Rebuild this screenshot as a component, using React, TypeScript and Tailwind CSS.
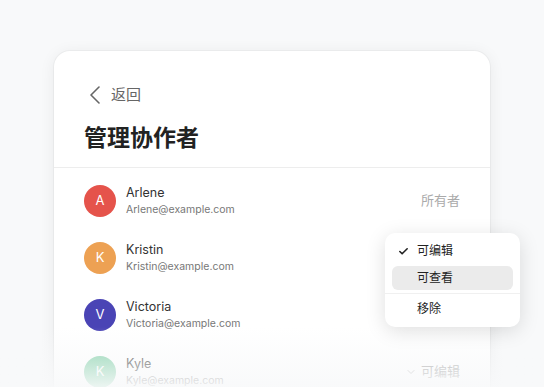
import { Check, ChevronDown } from 'lucide-react';

const people = [
  { name: 'Arlene', email: 'Arlene@example.com', color: 'bg-[#e5534b]', role: 'owner' },
  { name: 'Kristin', email: 'Kristin@example.com', color: 'bg-[#eda153]', role: 'menu' },
  { name: 'Victoria', email: 'Victoria@example.com', color: 'bg-[#4a44b5]', role: 'none' },
  { name: 'Kyle', email: 'Kyle@example.com', color: 'bg-[#7fcfa6]', role: 'edit' },
];

const font = { fontFamily: '"Inter", "Noto Sans CJK SC", sans-serif' };

export default function App() {
  return (
    <div className="relative h-[387px] w-[544px] overflow-hidden bg-[#f8f9fa]" style={font}>
      <div className="relative ml-[54px] mt-[51px] w-[436px] rounded-2xl bg-white shadow-[0_2px_16px_rgba(0,0,0,0.07)] ring-1 ring-black/[0.03]">
        {/* Header */}
        <div className="px-[30px] pt-[32px] pb-[13px]">
          <div className="flex h-[24px] items-center text-[#666]">
            <svg className="ml-[5px] h-[18px] w-[12px]" viewBox="0 0 12 18" fill="none" stroke="currentColor" strokeWidth={1.6} strokeLinecap="round" strokeLinejoin="round">
              <path d="M10 1 L2 9 L10 17" />
            </svg>
            <span className="ml-[10px] text-[15px]">返回</span>
          </div>
          <h1 className="mt-[15px] text-[23px] font-bold leading-[32px] text-[#222]">管理协作者</h1>
        </div>
        <div className="h-px bg-[#ededed]" />

        {/* Collaborators */}
        <div className="px-[30px] pt-[4px] pb-[40px]">
          {people.map((p) => (
            <div key={p.name} className="flex h-[57px] items-center">
              <div className={`flex h-[32px] w-[32px] items-center justify-center rounded-full text-[13px] text-white ${p.color}`}>
                {p.name[0]}
              </div>
              <div className="ml-[10px] flex-1">
                <div className="text-[12.5px] leading-[17px] text-[#333]">{p.name}</div>
                <div className="mt-[1px] text-[10.5px] leading-[15px] text-[#777]">{p.email}</div>
              </div>
              {p.role === 'owner' && <span className="text-[13px] text-[#aaa]">所有者</span>}
              {p.role === 'edit' && (
                <span className="flex items-center gap-[4px] text-[13px] text-[#999]">
                  <ChevronDown className="h-[12px] w-[12px]" strokeWidth={1.5} />
                  可编辑
                </span>
              )}
            </div>
          ))}
        </div>

        {/* Role menu */}
        <div className="absolute left-[331px] top-[182px] z-10 w-[135px] rounded-[10px] bg-white px-[7px] pt-[6px] pb-[6px] text-[12px] text-[#222] shadow-[0_4px_20px_rgba(0,0,0,0.13)]">
          <div className="flex h-[24px] items-center">
            <Check className="ml-[6px] h-[11px] w-[11px]" strokeWidth={3.5} />
            <span className="ml-[8px]">可编辑</span>
          </div>
          <div className="mt-[3px] flex h-[24px] items-center rounded-[6px] bg-[#ebebeb] pl-[25px]">可查看</div>
          <div className="mx-[-7px] mt-[3px] h-px bg-[#f0f0f0]" />
          <div className="mt-[3px] flex h-[24px] items-center pl-[25px]">移除</div>
        </div>
      </div>

      {/* Bottom fade */}
      <div className="pointer-events-none absolute inset-x-0 bottom-0 h-[60px] bg-gradient-to-b from-[#f8f9fa]/0 to-[#f8f9fa]/90" />
    </div>
  );
}
